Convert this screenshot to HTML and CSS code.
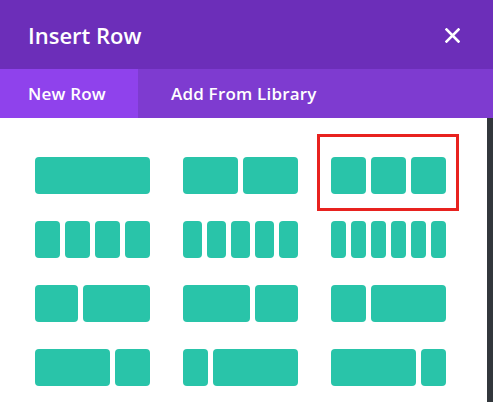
FILE: index.html
```html
<!DOCTYPE html>
<html>
<head>
<meta charset="utf-8">
<link rel="stylesheet" href="styles.css">
</head>
<body>
<div class="modal">
  <header class="head">
    <h1 class="title">Insert Row</h1>
    <button class="close" aria-label="Close">
      <svg width="15" height="15" viewBox="0 0 15 15"><path d="M1.5 1.5L13.5 13.5M13.5 1.5L1.5 13.5" stroke="#fff" stroke-width="2.6" stroke-linecap="square"/></svg>
    </button>
  </header>
  <nav class="tabs">
    <div class="tab active">New Row</div>
    <div class="tab">Add From Library</div>
  </nav>
  <div class="body">
    <main class="content">
      <div class="grid">
        <div class="cell"><span class="b"></span></div>
        <div class="cell"><span class="b"></span><span class="b"></span></div>
        <div class="cell selected"><span class="b"></span><span class="b"></span><span class="b"></span></div>

        <div class="cell"><span class="b"></span><span class="b"></span><span class="b"></span><span class="b"></span></div>
        <div class="cell"><span class="b"></span><span class="b"></span><span class="b"></span><span class="b"></span><span class="b"></span></div>
        <div class="cell"><span class="b"></span><span class="b"></span><span class="b"></span><span class="b"></span><span class="b"></span><span class="b"></span></div>

        <div class="cell"><span class="b w43"></span><span class="b w67"></span></div>
        <div class="cell"><span class="b w67"></span><span class="b w43"></span></div>
        <div class="cell"><span class="b w35"></span><span class="b w75"></span></div>

        <div class="cell"><span class="b w75"></span><span class="b w35"></span></div>
        <div class="cell"><span class="b w25"></span><span class="b w85"></span></div>
        <div class="cell"><span class="b w85"></span><span class="b w25"></span></div>
      </div>
    </main>
    <aside class="strip"></aside>
  </div>
</div>
</body>
</html>
```

FILE: styles.css
```css
* { box-sizing: border-box; }
html, body { margin: 0; padding: 0; background: #fff; }
body { font-family: "Open Sans", "Liberation Sans", sans-serif; width: 493px; height: 402px; overflow: hidden; }

.modal { display: flex; flex-direction: column; height: 402px; }

.head {
  height: 69px;
  background: #6c2eb9;
  display: flex;
  align-items: center;
  justify-content: space-between;
  padding: 0 33px 0 28px;
}
.title {
  margin: 0;
  color: #fff;
  font-size: 22px;
  font-weight: 600;
}
.close {
  border: 0;
  background: none;
  padding: 0;
  width: 15px;
  height: 15px;
  display: block;
  margin-top: 1px;
}
.close svg { display: block; }

.tabs {
  height: 49px;
  background: #7e3bd0;
  display: flex;
}
.tab {
  color: #fff;
  font-size: 17px;
  font-weight: 600;
  letter-spacing: 0.2px;
  white-space: nowrap;
  display: flex;
  align-items: center;
  padding: 0 28px;
}
.tab.active { background: #8f42ec; width: 138px; }
.tab:not(.active) { padding-left: 33px; }

.body { flex: 1; display: flex; }
.content { flex: 1; background: #fff; padding: 39px 0 0 35px; }
.strip { width: 6px; background: #32373c; }

.grid {
  display: grid;
  grid-template-columns: repeat(3, 115px);
  grid-auto-rows: 37px;
  column-gap: 33px;
  row-gap: 27px;
}
.cell { display: flex; gap: 5px; position: relative; }
.b { flex: 1 1 0; background: #29c4a9; border-radius: 4px; }
.w25 { flex-grow: 25; }
.w35 { flex-grow: 35; }
.w43 { flex-grow: 43; }
.w67 { flex-grow: 67; }
.w75 { flex-grow: 75; }
.w85 { flex-grow: 85; }

.selected::after {
  content: "";
  position: absolute;
  left: -14px;
  right: -13px;
  top: -23px;
  bottom: -17px;
  border: 3px solid #e8221f;
}
```
